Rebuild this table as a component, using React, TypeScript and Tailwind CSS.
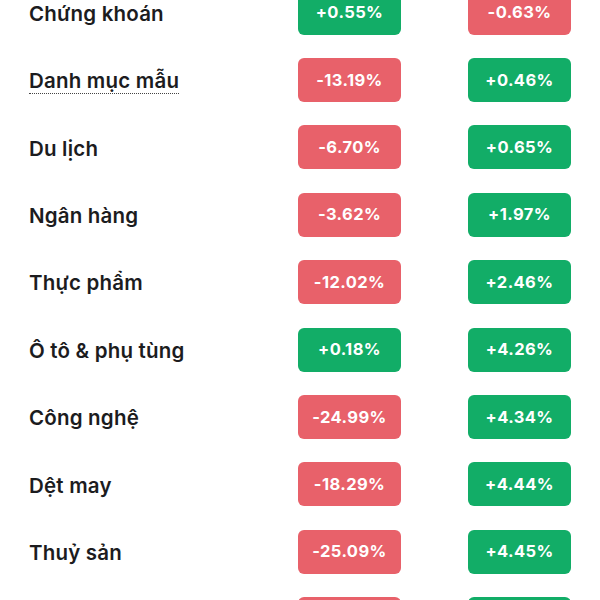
const rows: { name: string; a: string; b: string; dotted?: boolean }[] = [
    { name: "Chứng khoán", a: "+0.55%", b: "-0.63%" },
    { name: "Danh mục mẫu", a: "-13.19%", b: "+0.46%", dotted: true },
    { name: "Du lịch", a: "-6.70%", b: "+0.65%" },
    { name: "Ngân hàng", a: "-3.62%", b: "+1.97%" },
    { name: "Thực phẩm", a: "-12.02%", b: "+2.46%" },
    { name: "Ô tô & phụ tùng", a: "+0.18%", b: "+4.26%" },
    { name: "Công nghệ", a: "-24.99%", b: "+4.34%" },
    { name: "Dệt may", a: "-18.29%", b: "+4.44%" },
    { name: "Thuỷ sản", a: "-25.09%", b: "+4.45%" },
    { name: "Bất động sản", a: "-20.15%", b: "+4.51%" },
];

// Green for gains, red for losses
const Badge = ({ value }: { value: string }) => (
    <div
        className={`w-[103px] h-[44px] rounded-[6px] flex items-center justify-center text-white text-[16.5px] font-bold tracking-[0.4px] ${
            value.startsWith("-") ? "bg-[#e8616a]" : "bg-[#12ad67]"
        }`}>
        {value}
    </div>
);

const App = () => {
    return (
        <div className="w-[600px] h-[600px] overflow-hidden bg-white font-['Inter',sans-serif]">
            <div className="flex flex-col mt-[-21px]">
                {rows.map((r) => (
                    <div key={r.name} className="h-[67.4px] flex items-center pl-[29px]">
                        <div className="flex-1 pt-[3px]">
                            <span
                                className={`text-[20.5px] font-semibold tracking-[0.2px] text-[#1c1c1e] ${
                                    r.dotted ? "border-b-[1.5px] border-dotted border-[#444]" : ""
                                }`}>
                                {r.name}
                            </span>
                        </div>
                        <Badge value={r.a} />
                        <div className="w-[67px]" />
                        <Badge value={r.b} />
                        <div className="w-[29px]" />
                    </div>
                ))}
            </div>
        </div>
    );
};

export default App;
